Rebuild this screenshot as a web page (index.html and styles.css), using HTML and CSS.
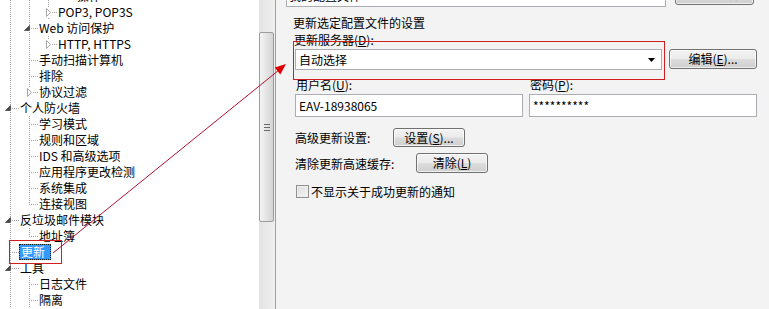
FILE: index.html
```html
<!DOCTYPE html>
<html lang="zh-CN">
<head>
    <meta charset="UTF-8">
    <title>更新设置</title>
    <link rel="stylesheet" href="styles.css">
</head>
<body>
<div class="window">
    <div class="tree-pane">
        <div class="tree">
            <div class="row"><span class="g v"></span><span class="g v"></span><span class="g v"></span><span class="n end"></span><span class="label">操作</span></div>
            <div class="row"><span class="g v"></span><span class="g v"></span><span class="n"><svg class="closed" width="7" height="9" viewBox="0 0 7 9"><rect width="7" height="9" fill="#fff"/><path d="M1.5 0.5 L5.5 4.5 L1.5 8.5 Z" fill="#fff" stroke="#a6a6a6"/></svg></span><span class="label">POP3, POP3S</span></div>
            <div class="row"><span class="g v"></span><span class="n"><svg class="open" width="7" height="7" viewBox="0 0 7 7"><rect width="7" height="7" fill="#fff"/><path d="M0.5 5.5 L5.5 0.5 L5.5 5.5 Z" fill="#4b4b4b" stroke="#5a5a5a"/></svg></span><span class="label">Web 访问保护</span></div>
            <div class="row"><span class="g v"></span><span class="g v"></span><span class="n end"><svg class="closed" width="7" height="9" viewBox="0 0 7 9"><rect width="7" height="9" fill="#fff"/><path d="M1.5 0.5 L5.5 4.5 L1.5 8.5 Z" fill="#fff" stroke="#a6a6a6"/></svg></span><span class="label">HTTP, HTTPS</span></div>
            <div class="row"><span class="g v"></span><span class="n"></span><span class="label">手动扫描计算机</span></div>
            <div class="row"><span class="g v"></span><span class="n"></span><span class="label">排除</span></div>
            <div class="row"><span class="g v"></span><span class="n end"><svg class="closed" width="7" height="9" viewBox="0 0 7 9"><rect width="7" height="9" fill="#fff"/><path d="M1.5 0.5 L5.5 4.5 L1.5 8.5 Z" fill="#fff" stroke="#a6a6a6"/></svg></span><span class="label">协议过滤</span></div>
            <div class="row"><span class="n"><svg class="open" width="7" height="7" viewBox="0 0 7 7"><rect width="7" height="7" fill="#fff"/><path d="M0.5 5.5 L5.5 0.5 L5.5 5.5 Z" fill="#4b4b4b" stroke="#5a5a5a"/></svg></span><span class="label">个人防火墙</span></div>
            <div class="row"><span class="g v"></span><span class="n"></span><span class="label">学习模式</span></div>
            <div class="row"><span class="g v"></span><span class="n"></span><span class="label">规则和区域</span></div>
            <div class="row"><span class="g v"></span><span class="n"></span><span class="label">IDS 和高级选项</span></div>
            <div class="row"><span class="g v"></span><span class="n"></span><span class="label">应用程序更改检测</span></div>
            <div class="row"><span class="g v"></span><span class="n"></span><span class="label">系统集成</span></div>
            <div class="row"><span class="g v"></span><span class="n end"></span><span class="label">连接视图</span></div>
            <div class="row"><span class="n"><svg class="open" width="7" height="7" viewBox="0 0 7 7"><rect width="7" height="7" fill="#fff"/><path d="M0.5 5.5 L5.5 0.5 L5.5 5.5 Z" fill="#4b4b4b" stroke="#5a5a5a"/></svg></span><span class="label">反垃圾邮件模块</span></div>
            <div class="row"><span class="g v"></span><span class="n end"></span><span class="label">地址簿</span></div>
            <div class="row"><span class="n"></span><span class="label selected">更新</span></div>
            <div class="row"><span class="n"><svg class="open" width="7" height="7" viewBox="0 0 7 7"><rect width="7" height="7" fill="#fff"/><path d="M0.5 5.5 L5.5 0.5 L5.5 5.5 Z" fill="#4b4b4b" stroke="#5a5a5a"/></svg></span><span class="label">工具</span></div>
            <div class="row"><span class="g v"></span><span class="n"></span><span class="label">日志文件</span></div>
            <div class="row"><span class="g v"></span><span class="n"></span><span class="label">隔离</span></div>
        </div>
    </div>

    <div class="vscroll">
        <div class="thumb"><span class="grip"></span></div>
    </div>

    <div class="settings">
        <div class="profile-row">
            <div class="field profile-field">我的配置文件</div>
            <div class="btn profile-btn">配置文件(<u>I</u>)...</div>
        </div>

        <div class="group">
            <div class="title">更新选定配置文件的设置</div>
            <div class="label-line">更新服务器(<u>D</u>):</div>
            <div class="server-row">
                <div class="combo">
                    <span>自动选择</span>
                    <svg width="7" height="4" viewBox="0 0 7 4"><path d="M0 0 H7 L3.5 4 Z" fill="#000"/></svg>
                </div>
                <div class="btn edit-btn">编辑(<u>E</u>)...</div>
            </div>

            <div class="creds">
                <div class="label-line">用户名(<u>U</u>):</div>
                <div class="label-line">密码(<u>P</u>):</div>
                <div class="field">EAV-18938065</div>
                <div class="field">**********</div>
            </div>

            <div class="action-row">
                <span class="action-label adv">高级更新设置:</span>
                <div class="btn small-btn short">设置(<u>S</u>)...</div>
            </div>
            <div class="action-row clear-row">
                <span class="action-label cache">清除更新高速缓存:</span>
                <div class="btn small-btn">清除(<u>L</u>)</div>
            </div>

            <div class="check-row">
                <span class="checkbox"></span>
                <span>不显示关于成功更新的通知</span>
            </div>
        </div>
    </div>

    <!-- red annotations drawn over the screenshot -->
    <svg class="marks" width="769" height="309" viewBox="0 0 769 309">
        <rect x="9.5" y="240.5" width="52" height="23" fill="none" stroke="#d11f1f"/>
        <rect x="293.5" y="41.5" width="371" height="38" fill="none" stroke="#d11f1f"/>
        <line x1="53" y1="253" x2="279" y2="70" stroke="#b01030"/>
        <polygon points="286,64 280.3,74.4 274.7,67.4" fill="#e00000"/>
    </svg>
</div>
</body>
</html>
```

FILE: styles.css
```css
body {
    margin: 0;
    font-family: "Noto Sans CJK SC", sans-serif;
    font-size: 12px;
    color: #000;
}
.window {
    position: relative;
    display: flex;
    width: 769px;
    height: 309px;
    overflow: hidden;
    background-color: #f3f3f3;
}

/* tree */
.tree-pane {
    width: 259px;
    flex: none;
    background-color: #fff;
    overflow: hidden;
}
.tree {
    margin-top: -12px;
}
.row {
    display: flex;
    height: 16px;
    line-height: 16px;
    white-space: nowrap;
}
.g, .n {
    flex: none;
    width: 19px;
    height: 16px;
}
.g.v {
    background: repeating-linear-gradient(to bottom, #a5a5a5 0 1px, transparent 1px 2px) no-repeat 10px 0 / 1px 16px;
}
.n {
    background:
        repeating-linear-gradient(to right, #a5a5a5 0 1px, transparent 1px 2px) no-repeat 12px 8px / 7px 1px,
        repeating-linear-gradient(to bottom, #a5a5a5 0 1px, transparent 1px 2px) no-repeat 10px 0 / 1px 16px;
}
.n.end {
    background:
        repeating-linear-gradient(to right, #a5a5a5 0 1px, transparent 1px 2px) no-repeat 12px 8px / 7px 1px,
        repeating-linear-gradient(to bottom, #a5a5a5 0 1px, transparent 1px 2px) no-repeat 10px 0 / 1px 9px;
}
.n svg {
    display: block;
}
.n .open {
    margin: 5px 0 0 5px;
}
.n .closed {
    margin: 4px 0 0 7px;
}
.label {
    padding-left: 1px;
}
.label.selected {
    padding: 0 6px 0 2px;
    background-color: #3399ff;
    color: #fff;
    outline: 1px dotted #1a1a1a;
    outline-offset: -1px;
}

/* scrollbar */
.vscroll {
    width: 17px;
    flex: none;
    border-right: 1px solid #a0a0a0;
    background: linear-gradient(to right, #e3e3e3, #efefef);
    padding-top: 32px;
    box-sizing: border-box;
}
.thumb {
    width: 13px;
    height: 188px;
    border: 1px solid #9c9c9c;
    border-radius: 2px;
    background: linear-gradient(to right, #f4f4f4, #e6e6e6 45%, #d4d4d4);
    display: flex;
    align-items: center;
    justify-content: center;
}
.grip {
    width: 6px;
    height: 5px;
    border-top: 1px solid #6a6a6a;
    border-bottom: 1px solid #6a6a6a;
    background: linear-gradient(#6a6a6a, #6a6a6a) no-repeat 0 2px / 6px 1px;
}

/* right side */
.settings {
    flex: 1;
    padding-left: 10px;
}
.profile-row {
    display: flex;
    gap: 9px;
    margin-top: -16px;
}
.field {
    height: 23px;
    box-sizing: border-box;
    border: 1px solid #abadb3;
    background-color: #fff;
    padding-left: 2px;
    line-height: 21px;
}
.profile-field {
    width: 380px;
}
.btn {
    box-sizing: border-box;
    height: 20px;
    line-height: 18px;
    text-align: center;
    border: 1px solid #707070;
    border-radius: 3px;
    background: linear-gradient(#f3f3f3 0%, #ebebeb 48%, #dcdcdc 52%, #cfcfcf 100%);
    box-shadow: inset 0 0 0 1px rgba(255, 255, 255, 0.7);
}
.profile-btn {
    width: 79px;
    height: 22px;
    margin-top: -1px;
}
.group {
    margin-left: 7px;
}
.title {
    margin-top: 8px;
    line-height: 16px;
}
.label-line {
    line-height: 16px;
    margin-top: 1px;
    padding-left: 1px;
}
.server-row {
    display: flex;
    gap: 7px;
    margin-top: 1px;
    margin-left: 2px;
}
.combo {
    width: 367px;
    height: 21px;
    box-sizing: border-box;
    border: 1px solid #abadb3;
    background-color: #fff;
    display: flex;
    align-items: center;
    justify-content: space-between;
    padding: 0 6px 0 3px;
}
.edit-btn {
    width: 88px;
}
.creds {
    display: grid;
    grid-template-columns: 228px 228px;
    column-gap: 6px;
    margin-top: 6px;
    margin-left: 2px;
}
.creds .label-line {
    margin-bottom: 1px;
}
.creds .field {
    padding-left: 3px;
}
.action-row {
    display: flex;
    align-items: center;
    height: 20px;
    margin-top: 10px;
    margin-left: 2px;
}
.clear-row {
    margin-top: 6px;
}
.action-label.adv {
    width: 98px;
}
.action-label.cache {
    width: 121px;
}
.small-btn {
    width: 72px;
}
.small-btn.short {
    height: 19px;
    line-height: 17px;
}
.check-row {
    display: flex;
    align-items: center;
    gap: 2px;
    height: 16px;
    margin-top: 10px;
    margin-left: 3px;
}
.checkbox {
    width: 13px;
    height: 13px;
    box-sizing: border-box;
    border: 1px solid #8f8f8f;
    background: linear-gradient(135deg, #dcdcdc, #f6f6f6);
    box-shadow: inset 0 0 0 1px #f0f0f0;
}

/* annotation layer */
.marks {
    position: absolute;
    top: 0;
    left: 0;
    pointer-events: none;
}
```
